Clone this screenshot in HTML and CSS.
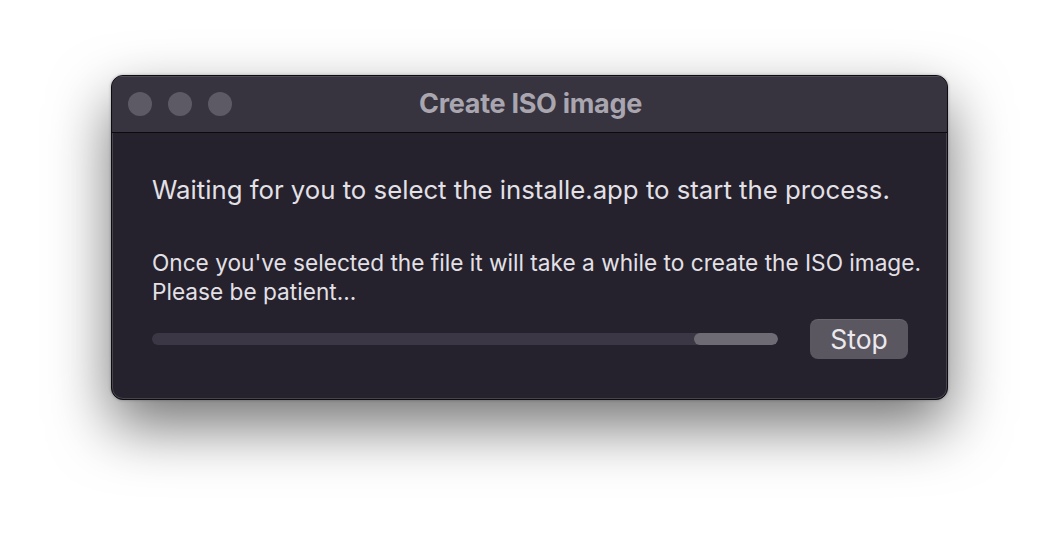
FILE: index.html
```html
<!DOCTYPE html>
<html>
<head>
<meta charset="utf-8">
<link rel="stylesheet" href="styles.css">
</head>
<body>
<div class="stage">
  <div class="window">
    <div class="titlebar">
      <div class="lights">
        <span class="light"></span>
        <span class="light"></span>
        <span class="light"></span>
      </div>
      <div class="title">Create ISO image</div>
    </div>
    <div class="content">
      <p class="headline">Waiting for you to select the installe.app to start the process.</p>
      <p class="note">Once you've selected the file it will take a while to create the ISO image.<br>Please be patient...</p>
      <div class="row">
        <div class="progress"><div class="fill"></div></div>
        <button class="btn">Stop</button>
      </div>
    </div>
  </div>
</div>
</body>
</html>
```
FILE: styles.css
```css
html, body {
  margin: 0;
  padding: 0;
  background: #ffffff;
  width: 1060px;
  height: 548px;
  overflow: hidden;
}
.stage {
  padding: 75px 0 0 111px;
  font-family: Inter, "Noto Sans", sans-serif;
}
.window {
  width: 837px;
  height: 325px;
  box-sizing: border-box;
  border-radius: 12px;
  background: #25212d;
  border: 1px solid #0d0c10;
  box-shadow: inset 0 0 0 1px rgba(255,255,255,0.16), 0 26px 60px rgba(0,0,0,0.55), 0 0 3px rgba(0,0,0,0.3);
  overflow: hidden;
  display: flex;
  flex-direction: column;
}
.titlebar {
  position: relative;
  height: 56px;
  flex: none;
  background: #37343f;
  border-bottom: 1px solid #0b0a0e;
  display: flex;
  align-items: center;
  justify-content: center;
  box-shadow: inset 0 1px 0 rgba(255,255,255,0.12);
}
.lights {
  position: absolute;
  left: 16px;
  top: 16px;
  display: flex;
  gap: 16px;
}
.light {
  width: 24px;
  height: 24px;
  border-radius: 50%;
  background: #5e5a65;
}
.title {
  color: #a9a6b0;
  font-size: 27px;
  font-weight: 700;
  letter-spacing: -0.3px;
  margin-left: 2px;
  margin-top: -2px;
}
.content {
  padding: 42px 0 0 40px;
  display: flex;
  flex-direction: column;
}
.headline {
  margin: 0;
  color: #e3e0e6;
  font-size: 25.75px;
  line-height: 30px;
  letter-spacing: 0;
  white-space: nowrap;
}
.note {
  margin: 43px 0 0 0;
  color: #e3e0e6;
  font-size: 22.65px;
  line-height: 29px;
  letter-spacing: 0;
  white-space: nowrap;
}
.row {
  margin-top: 13px;
  display: flex;
  align-items: center;
}
.progress {
  width: 626px;
  height: 12px;
  border-radius: 6px;
  background: #3b3744;
  position: relative;
  overflow: hidden;
}
.fill {
  position: absolute;
  left: 542px;
  top: 0;
  width: 84px;
  height: 12px;
  border-radius: 6px;
  background: #6f6b74;
}
.btn {
  margin-left: 32px;
  width: 98px;
  height: 40px;
  border: none;
  border-radius: 8px;
  background: #5b5760;
  color: #ebe8ee;
  font-family: Inter, "Noto Sans", sans-serif;
  font-size: 26.5px;
  padding: 0;
  box-shadow: inset 0 1px 0 rgba(255,255,255,0.08);
}
```
